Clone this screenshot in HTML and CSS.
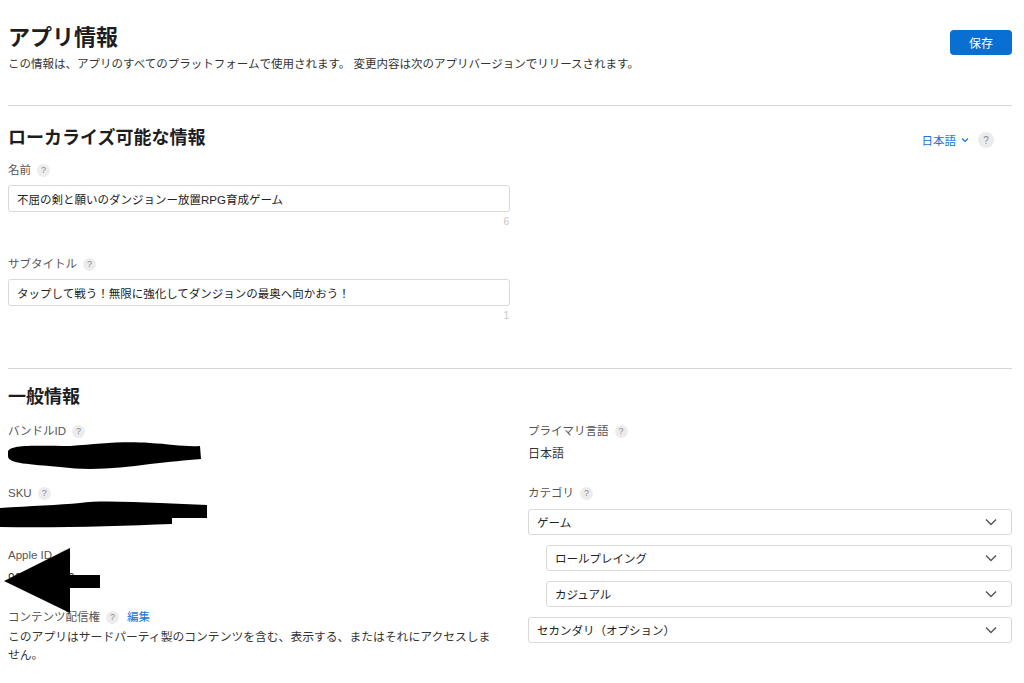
FILE: index.html
```html
<!DOCTYPE html>
<html lang="ja">
<head>
<meta charset="utf-8">
<title>アプリ情報</title>
<link rel="stylesheet" href="styles.css">
</head>
<body>
<div class="page">
  <header class="top">
    <div class="top-text">
      <h1 class="title">アプリ情報</h1>
      <p class="lead">この情報は、アプリのすべてのプラットフォームで使用されます。 変更内容は次のアプリバージョンでリリースされます。</p>
    </div>
    <button class="save">保存</button>
  </header>

  <section class="section">
    <div class="section-head">
      <h2 class="heading">ローカライズ可能な情報</h2>
      <div class="lang">
        <span class="lang-link">日本語</span>
        <svg class="lang-chev" width="8" height="6" viewBox="0 0 8 6"><path d="M1 1.5 L4 4.5 L7 1.5" fill="none" stroke="#1a73d6" stroke-width="1.2"/></svg>
        <span class="help help-lg">?</span>
      </div>
    </div>

    <div class="field narrow">
      <div class="label">名前 <span class="help">?</span></div>
      <div class="input">不屈の剣と願いのダンジョンー放置RPG育成ゲーム</div>
      <div class="count">6</div>
    </div>

    <div class="field narrow field-2">
      <div class="label">サブタイトル <span class="help">?</span></div>
      <div class="input">タップして戦う！無限に強化してダンジョンの最奥へ向かおう！</div>
      <div class="count">1</div>
    </div>
  </section>

  <section class="section general">
    <h2 class="heading">一般情報</h2>
    <div class="grid">
      <div class="col">
        <div class="item">
          <div class="label">バンドルID <span class="help">?</span></div>
          <div class="value">com.example.app</div>
        </div>
        <div class="item">
          <div class="label">SKU <span class="help">?</span></div>
          <div class="value">sku000000</div>
        </div>
        <div class="item">
          <div class="label">Apple ID <span class="help">?</span></div>
          <div class="value">9000000000</div>
        </div>
        <div class="item">
          <div class="label">コンテンツ配信権 <span class="help">?</span> <span class="edit">編集</span></div>
          <p class="desc">このアプリはサードパーティ製のコンテンツを含む、表示する、またはそれにアクセスしません。</p>
        </div>
      </div>
      <div class="col">
        <div class="item">
          <div class="label">プライマリ言語 <span class="help">?</span></div>
          <div class="value">日本語</div>
        </div>
        <div class="item">
          <div class="label">カテゴリ <span class="help">?</span></div>
          <div class="selects">
            <div class="select">ゲーム<svg class="chev" width="12" height="8" viewBox="0 0 12 8"><path d="M1 1.5 L6 6.5 L11 1.5" fill="none" stroke="#555" stroke-width="1.4"/></svg></div>
            <div class="select sub">ロールプレイング<svg class="chev" width="12" height="8" viewBox="0 0 12 8"><path d="M1 1.5 L6 6.5 L11 1.5" fill="none" stroke="#555" stroke-width="1.4"/></svg></div>
            <div class="select sub">カジュアル<svg class="chev" width="12" height="8" viewBox="0 0 12 8"><path d="M1 1.5 L6 6.5 L11 1.5" fill="none" stroke="#555" stroke-width="1.4"/></svg></div>
            <div class="select">セカンダリ（オプション）<svg class="chev" width="12" height="8" viewBox="0 0 12 8"><path d="M1 1.5 L6 6.5 L11 1.5" fill="none" stroke="#555" stroke-width="1.4"/></svg></div>
          </div>
        </div>
      </div>
    </div>
  </section>
</div>

<svg class="redact" width="1024" height="683" viewBox="0 0 1024 683">
  <path d="M8 452 C8 444 40 446 70 446 C100 444 120 441 150 443 C170 444 185 447 200 446 L201 459 C185 460 170 462 150 464 C120 468 90 471 60 467 C30 464 8 464 8 456 Z" fill="#000"/>
  <path d="M0 508 C30 506 60 505 80 503 C100 500 130 502 160 503 L207 505 L207 518 L172 518 L172 524 C120 526 60 528 0 527 Z" fill="#000"/>
  <path d="M4 581 L70 548 L70 575 L100 575 L100 588 L70 588 L70 613 Z" fill="#000"/>
</svg>
</body>
</html>
```

FILE: styles.css
```css
* { box-sizing: border-box; }
html, body { margin: 0; padding: 0; background: #fff; }
body {
  font-family: "Liberation Sans", "Noto Sans CJK JP", sans-serif;
  color: #333;
  font-size: 11px;
  overflow: hidden;
}
.page {
  padding: 24px 12px 0 8px;
  width: 1024px;
}
.top {
  display: flex;
  justify-content: space-between;
  align-items: flex-start;
  padding-bottom: 34px;
  border-bottom: 1px solid #d6d6d6;
}
.title {
  margin: 0;
  font-size: 22px;
  line-height: 28px;
  font-weight: 700;
  color: #1d1d1f;
}
.lead {
  margin: 5px 0 0;
  font-size: 11.5px;
  line-height: 14px;
  color: #333;
}
.save {
  margin-top: 6px;
  width: 62px;
  height: 25px;
  border: none;
  border-radius: 4px;
  background: #0a6fd2;
  color: #fff;
  font-family: "Noto Sans CJK JP", sans-serif;
  font-size: 12px;
  padding: 0;
}
.section {
  padding-top: 20px;
  padding-bottom: 46px;
  border-bottom: 1px solid #d6d6d6;
}
.section-head {
  display: flex;
  justify-content: space-between;
  align-items: flex-end;
}
.heading {
  margin: 0;
  font-size: 18px;
  line-height: 24px;
  font-weight: 700;
  color: #1d1d1f;
}
.lang {
  display: flex;
  align-items: center;
  gap: 5px;
  margin-right: 18px;
  margin-bottom: 2px;
}
.lang-link {
  color: #1a73d6;
  font-size: 11.5px;
}
.lang-chev { margin-right: 4px; }
.help {
  display: inline-flex;
  align-items: center;
  justify-content: center;
  width: 13px;
  height: 13px;
  border-radius: 50%;
  background: #ececec;
  color: #888;
  font-size: 9px;
  font-family: "Liberation Sans", sans-serif;
  vertical-align: middle;
  margin-left: 4px;
}
.help-lg { width: 16px; height: 16px; font-size: 10px; margin-left: 0; }
.field { margin-top: 12px; }
.field-2 { margin-top: 28px; }
.narrow { width: 502px; }
.label {
  font-size: 11.5px;
  line-height: 16px;
  color: #555;
  display: flex;
  align-items: center;
  gap: 2px;
}
.input {
  margin-top: 7px;
  height: 27px;
  border: 1px solid #d9d9d9;
  border-radius: 3px;
  padding: 0 8px;
  display: flex;
  align-items: center;
  font-size: 11.5px;
  color: #222;
}
.count {
  text-align: right;
  font-size: 10px;
  color: #c8c8c8;
  line-height: 12px;
  margin-top: 4px;
  padding-right: 1px;
}
.general {
  border-bottom: none;
  padding-top: 16px;
}
.grid {
  display: grid;
  grid-template-columns: 502px 1fr;
  column-gap: 18px;
  margin-top: 14px;
}
.item { margin-bottom: 23px; }
.value {
  margin-top: 7px;
  font-size: 12px;
  line-height: 16px;
  color: #333;
}
.edit { color: #1a73d6; margin-left: 6px; font-size: 11.5px; }
.desc {
  margin: 3px 0 0;
  font-size: 11.8px;
  line-height: 18px;
  color: #333;
  width: 489px;
}
.selects {
  margin-top: 8px;
  display: flex;
  flex-direction: column;
  gap: 10px;
}
.select {
  height: 26px;
  border: 1px solid #d9d9d9;
  border-radius: 3px;
  padding: 0 14px 0 8px;
  display: flex;
  align-items: center;
  justify-content: space-between;
  font-size: 11.5px;
  color: #222;
}
.select.sub { margin-left: 18px; }
.redact {
  position: absolute;
  left: 0;
  top: 0;
  pointer-events: none;
}
```
